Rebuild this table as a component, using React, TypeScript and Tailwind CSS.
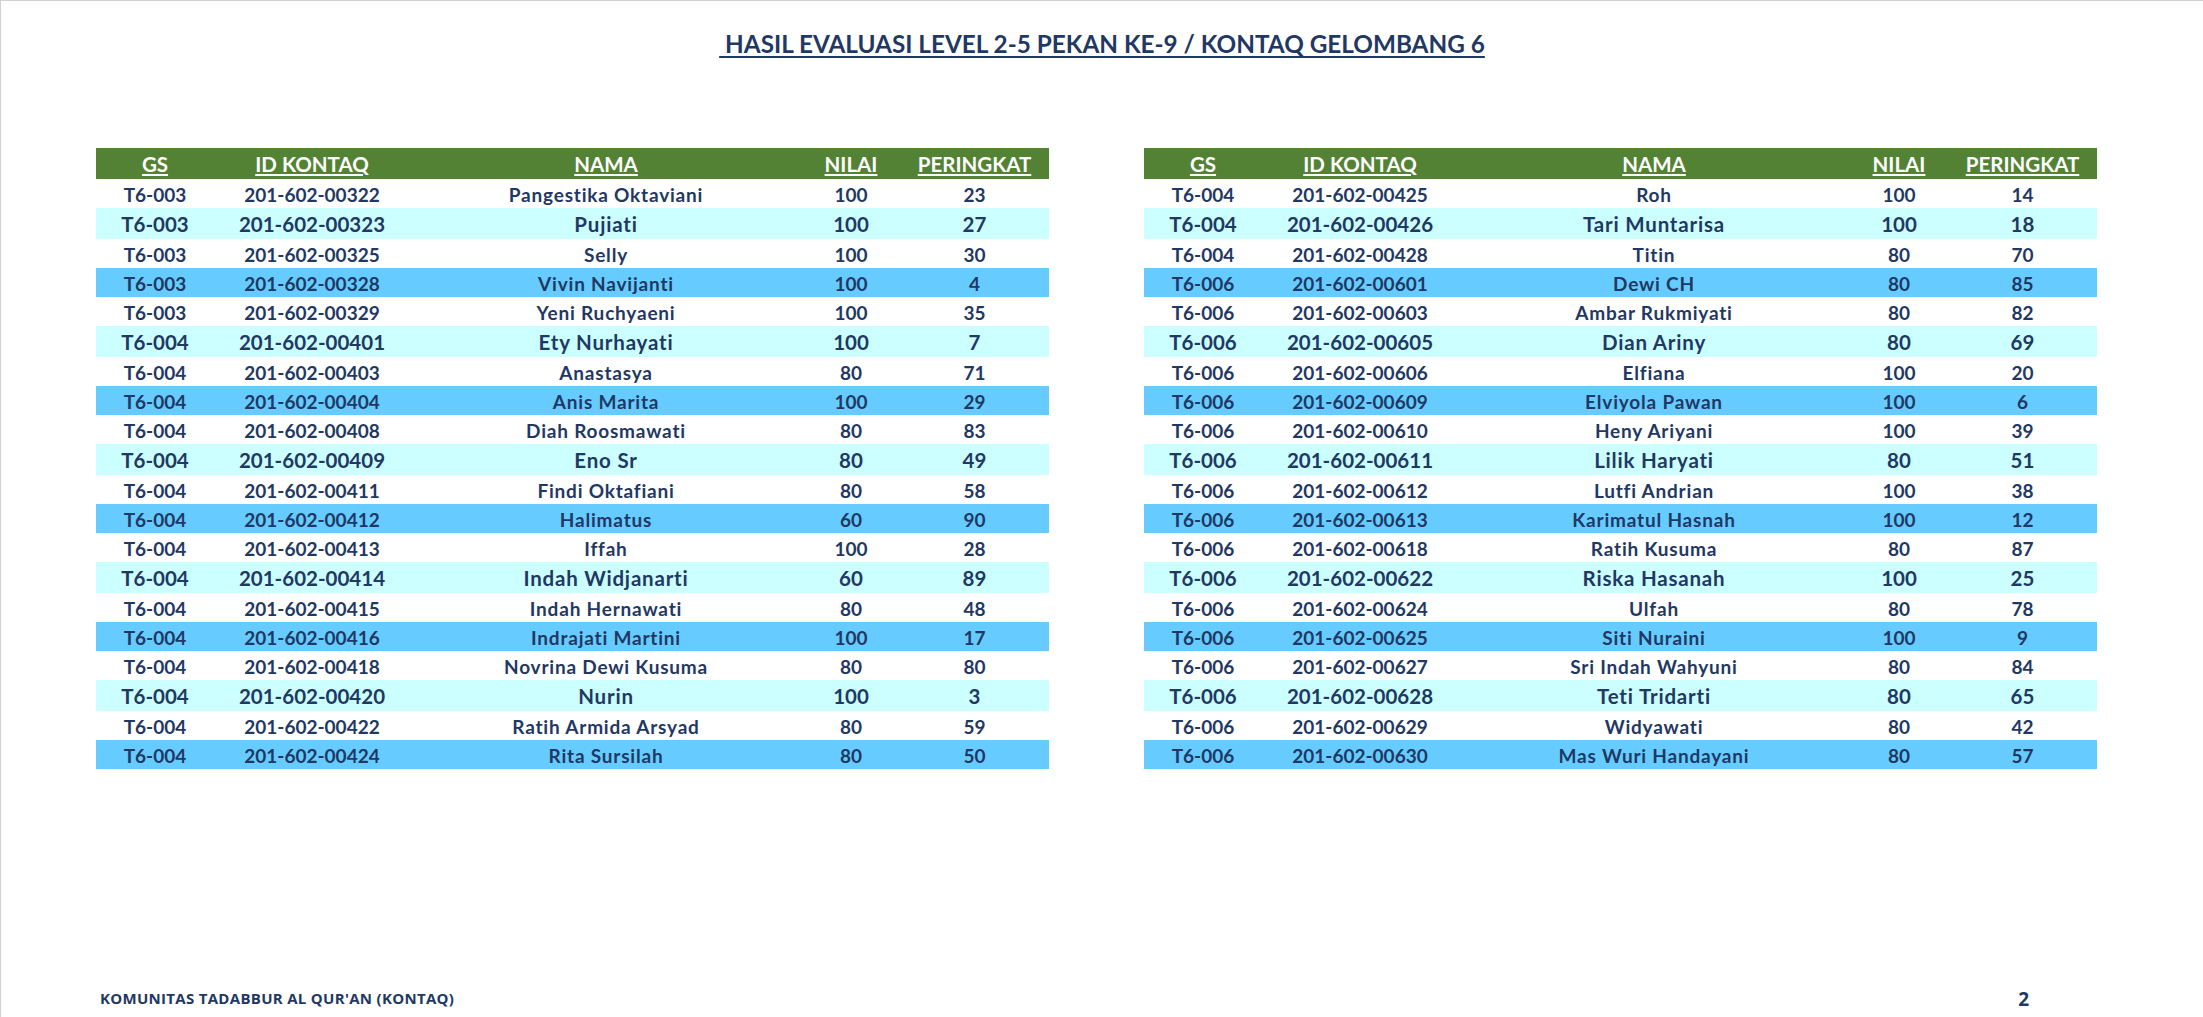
import React from "react";

type Row = [string, string, string, string, string];

const LEFT: Row[] = [
  ["T6-003", "201-602-00322", "Pangestika Oktaviani", "100", "23"],
  ["T6-003", "201-602-00323", "Pujiati", "100", "27"],
  ["T6-003", "201-602-00325", "Selly", "100", "30"],
  ["T6-003", "201-602-00328", "Vivin Navijanti", "100", "4"],
  ["T6-003", "201-602-00329", "Yeni Ruchyaeni", "100", "35"],
  ["T6-004", "201-602-00401", "Ety Nurhayati", "100", "7"],
  ["T6-004", "201-602-00403", "Anastasya", "80", "71"],
  ["T6-004", "201-602-00404", "Anis Marita", "100", "29"],
  ["T6-004", "201-602-00408", "Diah Roosmawati", "80", "83"],
  ["T6-004", "201-602-00409", "Eno Sr", "80", "49"],
  ["T6-004", "201-602-00411", "Findi Oktafiani", "80", "58"],
  ["T6-004", "201-602-00412", "Halimatus", "60", "90"],
  ["T6-004", "201-602-00413", "Iffah", "100", "28"],
  ["T6-004", "201-602-00414", "Indah Widjanarti", "60", "89"],
  ["T6-004", "201-602-00415", "Indah Hernawati", "80", "48"],
  ["T6-004", "201-602-00416", "Indrajati Martini", "100", "17"],
  ["T6-004", "201-602-00418", "Novrina Dewi Kusuma", "80", "80"],
  ["T6-004", "201-602-00420", "Nurin", "100", "3"],
  ["T6-004", "201-602-00422", "Ratih Armida Arsyad", "80", "59"],
  ["T6-004", "201-602-00424", "Rita Sursilah", "80", "50"],
];

const RIGHT: Row[] = [
  ["T6-004", "201-602-00425", "Roh", "100", "14"],
  ["T6-004", "201-602-00426", "Tari Muntarisa", "100", "18"],
  ["T6-004", "201-602-00428", "Titin", "80", "70"],
  ["T6-006", "201-602-00601", "Dewi CH", "80", "85"],
  ["T6-006", "201-602-00603", "Ambar Rukmiyati", "80", "82"],
  ["T6-006", "201-602-00605", "Dian Ariny", "80", "69"],
  ["T6-006", "201-602-00606", "Elfiana", "100", "20"],
  ["T6-006", "201-602-00609", "Elviyola Pawan", "100", "6"],
  ["T6-006", "201-602-00610", "Heny Ariyani", "100", "39"],
  ["T6-006", "201-602-00611", "Lilik Haryati", "80", "51"],
  ["T6-006", "201-602-00612", "Lutfi Andrian", "100", "38"],
  ["T6-006", "201-602-00613", "Karimatul Hasnah", "100", "12"],
  ["T6-006", "201-602-00618", "Ratih Kusuma", "80", "87"],
  ["T6-006", "201-602-00622", "Riska Hasanah", "100", "25"],
  ["T6-006", "201-602-00624", "Ulfah", "80", "78"],
  ["T6-006", "201-602-00625", "Siti Nuraini", "100", "9"],
  ["T6-006", "201-602-00627", "Sri Indah Wahyuni", "80", "84"],
  ["T6-006", "201-602-00628", "Teti Tridarti", "80", "65"],
  ["T6-006", "201-602-00629", "Widyawati", "80", "42"],
  ["T6-006", "201-602-00630", "Mas Wuri Handayani", "80", "57"],
];

const GRID = "grid grid-cols-[118px_196px_392px_98px_149px]";

function rowClass(i: number): string {
  const m = i % 4;
  if (m === 1) return `${GRID} h-[31px] bg-[#ccffff] text-[20.5px]`;
  if (m === 3) return `${GRID} h-[29px] bg-[#66ccff] text-[19px]`;
  return `${GRID} h-[29px] bg-white text-[19px]`;
}

function DataTable({ rows }: { rows: Row[] }) {
  const heads = ["GS", "ID KONTAQ", "NAMA", "NILAI", "PERINGKAT"];
  return (
    <div className="w-[953px] flex flex-col">
      <div className={`${GRID} h-[31px] bg-[#548235] text-white text-[20.5px]`}>
        {heads.map((h) => (
          <div key={h} className="flex items-center justify-center pt-[1px]">
            <span className="underline decoration-2 underline-offset-[2px] leading-none">{h}</span>
          </div>
        ))}
      </div>
      {rows.map((r, i) => (
        <div key={r[1]} className={rowClass(i)}>
          {r.map((c, j) => (
            <div
              key={j}
              className={
                j === 2
                  ? "flex items-center justify-center pt-[2px] whitespace-nowrap leading-none tracking-[0.8px]"
                  : "flex items-center justify-center pt-[2px] whitespace-nowrap leading-none"
              }
            >
              {c}
            </div>
          ))}
        </div>
      ))}
    </div>
  );
}

export default function App() {
  return (
    <div
      className="w-[2203px] h-[1017px] bg-white border-t border-l border-[#d0d0d0] flex flex-col text-[#1f3864] font-bold overflow-hidden"
      style={{ fontFamily: "Lato, 'Open Sans', sans-serif" }}
    >
      <div className="h-[147px] pt-[28px] flex justify-center">
        <h1 className="text-[24.3px] leading-[1.2] font-bold underline decoration-2 underline-offset-[3px]">
          {"\u00a0"}HASIL EVALUASI LEVEL 2-5 PEKAN KE-9 / KONTAQ GELOMBANG 6
        </h1>
      </div>
      <div className="flex pl-[95px] gap-[95px]">
        <DataTable rows={LEFT} />
        <DataTable rows={RIGHT} />
      </div>
      <div className="flex-1" />
      <div
        className="flex items-end pb-[4px] pl-[99px] pr-[174px]"
        style={{ fontFamily: "'Open Sans', sans-serif" }}
      >
        <span className="text-[15px] tracking-[0.3px] mb-[4px]">KOMUNITAS TADABBUR AL QUR'AN (KONTAQ)</span>
        <span className="ml-auto text-[19px]">2</span>
      </div>
    </div>
  );
}
